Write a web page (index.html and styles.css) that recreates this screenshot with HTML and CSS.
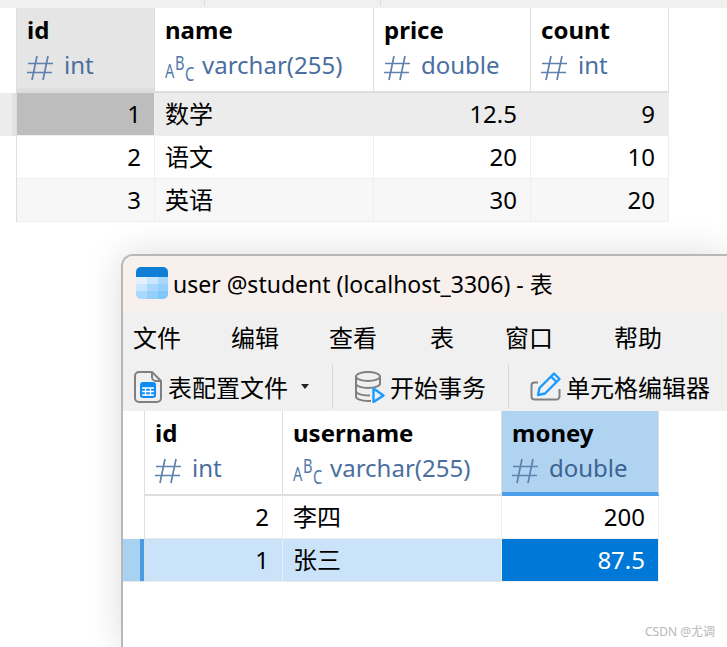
FILE: index.html
```html
<!DOCTYPE html>
<html lang="en">
<head>
    <meta charset="UTF-8">
    <title>user @student</title>
    <link rel="stylesheet" href="styles.css">
</head>
<body>
    <svg class="defs" width="0" height="0">
        <symbol id="hash" viewBox="0 0 26 26">
            <path d="M10 1 5 25M21 1 16 25M1 8.500h25M0 17.500h25" fill="none" stroke="currentColor" stroke-width="1.700"/>
        </symbol>
    </svg>

    <div class="top-strip"><i class="tick tick-a"></i><i class="tick tick-b"></i></div>

    <div class="grid grid-course">
        <div class="cell gutter"></div>
        <div class="cell head head-active"><b>id</b><span class="type"><svg class="hash"><use href="#hash"/></svg>int</span></div>
        <div class="cell head"><b>name</b><span class="type"><span class="abc"><em>A</em><em>B</em><em>C</em></span>varchar(255)</span></div>
        <div class="cell head"><b>price</b><span class="type"><svg class="hash"><use href="#hash"/></svg>double</span></div>
        <div class="cell head"><b>count</b><span class="type"><svg class="hash"><use href="#hash"/></svg>int</span></div>

        <div class="cell gutter gutter-current"></div>
        <div class="cell num row-current cell-grey">1</div>
        <div class="cell txt row-current">数学</div>
        <div class="cell num row-current">12.5</div>
        <div class="cell num row-current">9</div>

        <div class="cell gutter"></div>
        <div class="cell num">2</div>
        <div class="cell txt">语文</div>
        <div class="cell num">20</div>
        <div class="cell num">10</div>

        <div class="cell gutter"></div>
        <div class="cell num row-alt">3</div>
        <div class="cell txt row-alt">英语</div>
        <div class="cell num row-alt">30</div>
        <div class="cell num row-alt">20</div>
    </div>

    <div class="window">
        <div class="titlebar">
            <svg class="app-icon" width="32" height="32" viewBox="0 0 32 32">
                <rect width="32" height="32" rx="5" fill="#a8d8fd"/>
                <path d="M0 10h11v7H0z" fill="#e0f0fe"/>
                <path d="M11 10h11v7H11z" fill="#cbe6fd"/>
                <path d="M0 17h11v7H0z" fill="#cde6fd"/>
                <path d="M22 17h10v7H22zM11 24h11v8H11z" fill="#95cffc"/>
                <path d="M22 24h10v3a5 5 0 0 1-5 5h-5z" fill="#7fc6fb"/>
                <path d="M0 10V5a5 5 0 0 1 5-5h22a5 5 0 0 1 5 5v5z" fill="#0f7fd6"/>
            </svg>
            <span class="title-text">user @student (localhost_3306) - 表</span>
        </div>
        <div class="menubar">
            <span>文件</span><span>编辑</span><span>查看</span><span class="menu-table">表</span><span>窗口</span><span class="menu-help">帮助</span>
        </div>
        <div class="toolbar">
            <div class="tool tool-file">
                <svg width="28" height="32" viewBox="0 0 28 32">
                    <path d="M5 1h13l9 9v17a4 4 0 0 1-4 4H5a4 4 0 0 1-4-4V5a4 4 0 0 1 4-4z" fill="none" stroke="#808080" stroke-width="2"/>
                    <path d="M18 1v5a4 4 0 0 0 4 4h5" fill="none" stroke="#808080" stroke-width="2"/>
                    <rect x="6" y="11" width="16" height="16" rx="3" fill="#0d8bf5"/>
                    <path d="M8 17h12M8 20.500h12M8 24h12M11.500 17v8M16.500 17v8" stroke="#fff" stroke-width="1.300"/>
                </svg>
                <span>表配置文件</span>
                <i class="caret"></i>
            </div>
            <i class="sep"></i>
            <div class="tool tool-db">
                <svg width="30" height="32" viewBox="0 0 30 32">
                    <ellipse cx="13" cy="5.500" rx="12" ry="4.500" fill="none" stroke="#808080" stroke-width="2"/>
                    <path d="M1 5.500v20c0 2.500 5 4.500 12 4.500h3M25 5.500V14M1 12.500c0 2.500 5 4.500 12 4.500s12-2 12-4.500M1 20c0 2.500 5 4.500 12 4.500h2" fill="none" stroke="#808080" stroke-width="2"/>
                    <path d="M18.500 17.500 28.500 24.500 18.500 31z" fill="#f0f0f0" stroke="#1a9bff" stroke-width="2.400" stroke-linejoin="round"/>
                </svg>
                <span>开始事务</span>
            </div>
            <i class="sep"></i>
            <div class="tool tool-cell">
                <svg width="31" height="31" viewBox="0 0 31 31">
                    <path d="M8 11.500H4.500a3 3 0 0 0-3 3v11a3 3 0 0 0 3 3h22a3 3 0 0 0 3-3V18" fill="none" stroke="#808080" stroke-width="2"/>
                    <path d="M8 24 9.500 17 24 2.500 29.500 8 15 22.500z" fill="none" stroke="#1a9bff" stroke-width="2.400" stroke-linejoin="round"/>
                    <path d="M21 5.500 26.500 11" stroke="#1a9bff" stroke-width="2.400"/>
                </svg>
                <span>单元格编辑器</span>
            </div>
        </div>

        <div class="grid grid-user">
            <div class="cell gutter"></div>
            <div class="cell head"><b>id</b><span class="type"><svg class="hash"><use href="#hash"/></svg>int</span></div>
            <div class="cell head"><b>username</b><span class="type"><span class="abc"><em>A</em><em>B</em><em>C</em></span>varchar(255)</span></div>
            <div class="cell head head-selected"><b>money</b><span class="type"><svg class="hash"><use href="#hash"/></svg>double</span></div>

            <div class="cell gutter"></div>
            <div class="cell num">2</div>
            <div class="cell txt">李四</div>
            <div class="cell num">200</div>

            <div class="cell gutter gutter-selected"></div>
            <div class="cell num row-selected">1</div>
            <div class="cell txt row-selected">张三</div>
            <div class="cell num cell-focus">87.5</div>
        </div>
    </div>

    <div class="watermark">CSDN @尤调</div>
</body>
</html>
```

FILE: styles.css
```css
* {
    box-sizing: border-box;
}
html, body {
    height: 647px;
    overflow: hidden;
}
body {
    margin: 0;
    position: relative;
    background: white;
    color: black;
    font-family: "Noto Sans", "Noto Sans CJK SC", sans-serif;
    font-size: 24px;
}
.defs {
    position: absolute;
}

.top-strip {
    height: 8px;
    background: #f0f0f0;
    display: flex;
}
.tick {
    width: 1px;
    height: 6px;
    background: #dcdcdc;
}
.tick-a {
    margin-left: 204px;
}
.tick-b {
    margin-left: 175px;
}

.grid {
    display: grid;
    background: white;
}
.grid-course {
    grid-template-columns: 17px 138px 219px 157px 138px;
    grid-template-rows: 85px 43px 43px 43px;
    width: 669px;
    position: relative;
    z-index: 1;
}
.grid-user {
    grid-template-columns: 22px 138px 219px 157px;
    grid-template-rows: 85px 43px 43px;
    width: 536px;
}

.cell {
    border-right: 1px solid #efefef;
    border-bottom: 1px solid #efefef;
    line-height: 42px;
    white-space: nowrap;
}
.gutter {
    border-right: 1px solid #dedede;
    border-bottom: 0;
}
.head {
    border-right: 1px solid #dedede;
    border-bottom: 2px solid #dedede;
    padding: 3px 0 0 10px;
    display: flex;
    flex-direction: column;
    line-height: 38px;
}
.head b {
    font-weight: 700;
}
.type {
    display: flex;
    align-items: center;
    height: 32px;
    color: #4a6f9f;
}
.hash {
    width: 26px;
    height: 26px;
    margin: 5px 11px 0 0;
    color: #5f82ad;
}
.abc {
    display: flex;
    width: 37px;
    height: 32px;
    font-size: 19.5px;
    line-height: 15px;
    color: #4f77a8;
}
.abc em {
    font-style: normal;
    width: 10px;
    margin-top: 14px;
    transform: scaleX(0.75);
    transform-origin: left;
}
.abc em:nth-child(2) {
    margin-top: 6px;
}
.abc em:nth-child(3) {
    margin-top: 17px;
}

.num {
    text-align: right;
    padding-right: 13px;
}
.txt {
    padding-left: 10px;
}
.cell:nth-child(5n+6) {
    border-bottom-color: #e6e6e6;
}

.head-active {
    background: #e5e5e5;
    border-bottom-color: #dcdcdc;
    box-shadow: inset 0 -3px 0 #dedede;
}
.row-current {
    background: #ececec;
}
.cell-grey {
    background: #bdbdbd;
}
.row-alt {
    background: #f7f7f7;
}
.gutter-current {
    background: linear-gradient(to right, #ececec 12px, #e2e2e2 12px);
}

.window {
    width: 606px;
    height: 393px;
    margin: 32px 0 0 121px;
    border: 2px solid #b8b8b8;
    border-right: 0;
    border-bottom: 0;
    border-radius: 12px 0 0 0;
    background: white;
    box-shadow: 0 0 36px rgba(0, 0, 0, 0.14);
    overflow: hidden;
}
.titlebar {
    height: 56px;
    background: #f7f0ed;
    display: flex;
    align-items: center;
    padding: 0 0 2px 13px;
    font-size: 23px;
}
.app-icon {
    margin-right: 5px;
}
.title-text {
    margin-bottom: 1px;
}
.menubar {
    height: 50px;
    background: #f0f0f0;
    display: flex;
    align-items: center;
    gap: 50px;
    padding: 0 0 2px 10px;
}
.menu-table {
    margin-left: 3px;
    margin-right: 1px;
}
.menu-help {
    margin-left: 11px;
}
.toolbar {
    height: 49px;
    background: #f0f0f0;
    display: flex;
    align-items: center;
}
.tool {
    display: flex;
    align-items: center;
}
.tool-file {
    width: 209px;
    padding-left: 11px;
    gap: 6px;
}
.caret {
    width: 0;
    height: 0;
    margin-left: 7px;
    border-left: 4.500px solid transparent;
    border-right: 4.500px solid transparent;
    border-top: 5px solid #222;
}
.sep {
    width: 1px;
    height: 45px;
    background: #d8d8d8;
}
.tool-db {
    width: 175px;
    padding-left: 22px;
    gap: 5px;
}
.tool-cell {
    padding-left: 21px;
    gap: 5px;
}

.head-selected {
    background: #afd3f0;
    border-bottom: 4px solid #4c9fe6;
}
.head-selected .type {
    color: #3b6492;
}
.row-selected {
    background: #cbe3f8;
}
.gutter-selected {
    background: linear-gradient(to right, #a9d1f2 17px, #4c9be0 17px);
    border-bottom: 1px solid #e6e6e6;
}
.cell-focus {
    background: #0078d7;
    color: white;
}

.watermark {
    position: absolute;
    left: 645px;
    top: 624px;
    font-size: 12px;
    line-height: 16px;
    color: #b8b8b8;
}
```
